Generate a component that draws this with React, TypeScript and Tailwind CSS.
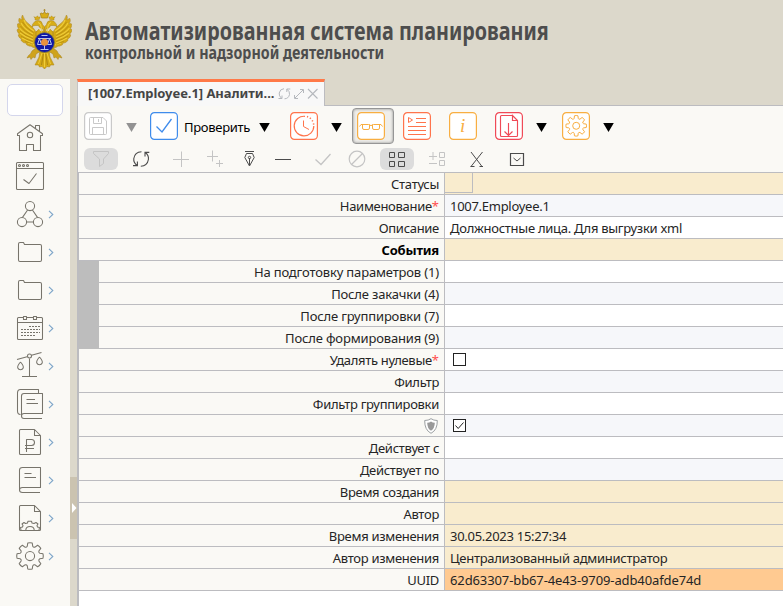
import React from "react";

const gearPath = (cx: number, cy: number, r: number, depth: number) => {
  const pts: string[] = [];
  const teeth = 8;
  for (let i = 0; i < teeth; i++) {
    const a = (i * 2 * Math.PI) / teeth - Math.PI / 2;
    const at = (rad: number, d: number) =>
      `${(cx + rad * Math.cos(a + d)).toFixed(2)} ${(cy + rad * Math.sin(a + d)).toFixed(2)}`;
    const inner = r - depth;
    pts.push(`${i === 0 ? "M" : "L"}${at(inner, -0.27)}`);
    pts.push(`L${at(r, -0.17)} Q${at(r + 0.4, 0)} ${at(r, 0.17)}`);
    pts.push(`L${at(inner, 0.27)} Q${at(inner - 1.1, 0.39)} ${at(inner, 0.51)}`);
  }
  return pts.join(" ") + "Z";
};

const Wing = () => (
  <g>
    <path
      d="M36 32Q34 28 30 25Q24 21 22.5 15Q21 17 22 20Q19.5 18 19 18.5Q18 21 20 24Q17.5 23 17.5 24Q17 27 19 29Q17 29 17 30Q17.5 33 19.5 34Q17.8 34.5 18.5 36Q19.5 38.5 21.5 39Q20.5 40 21.5 41Q24 43.5 26 43Q26 45 28 45.5Q30 46.5 31 46Q32 47.5 36 48Z"
      fill="#d5a915"
      stroke="#b08c2b"
      strokeWidth=".6"
    />
    <path d="M24 20Q26 26 34 31M21 23Q24 29 33 34M19.5 28Q23 33 33 37M20 33Q25 37 33 40M22 38Q27 41 33 43M28 43L34 45" stroke="#efcd3a" strokeWidth="1.1" fill="none" />
    <path d="M22.5 22Q25 27.5 33.5 32.5M20.5 26Q24 31.5 33 35.5M20 31Q24 35.5 33 38.5M21 36Q26 39.5 33 41.5M25 41L33 44.5" stroke="#a17a10" strokeWidth=".5" fill="none" />
  </g>
);

const EagleHead = () => (
  <g>
    <path d="M43.5 36L43 29Q39 28 38.5 25.5L35 25.5Q33 25.5 32 27Q32 24 34 22.5Q35 20.5 38 20.5Q42 20.5 42.5 24.5L44.5 27V36L36 36Q35 32 39 29" fill="#d8ad18" stroke="#a5801a" strokeWidth=".5" />
    <path d="M35 20V18L33.8 16.8L36 17.3L37.5 15.8L38.5 17.3L40.2 16.8L39.3 19.5Z" fill="#d8ad18" stroke="#a5801a" strokeWidth=".4" />
    <path d="M38 22.5Q40.5 23 41 26L42 34" stroke="#f0d244" strokeWidth=".9" fill="none" />
  </g>
);

const Emblem = () => (
  <svg width="56" height="62" viewBox="16 8 56 62" fill="none" className="shrink-0">
    <Wing />
    <g transform="translate(89 0) scale(-1 1)"><Wing /></g>
    <path d="M37 47L32 51Q31 54 28.5 55.5L27 58L30 57L31 59.5L33 57L35 58L36 54L41 51ZM52 47L57 51Q58 54 60.5 55.5L62 58L59 57L58 59.5L56 57L54 58L53 54L48 51Z" fill="#cfa31c" stroke="#a5801a" strokeWidth=".5" />
    <path d="M40 50L39 57L35 65L38.5 65L39.5 67L42 66.5L44.5 69L47 66.5L49.5 67L50.5 65L54 65L50 57L49 50Z" fill="#d5a915" stroke="#a5801a" strokeWidth=".5" />
    <path d="M42 53L38.5 64M44.5 53V67M47 53L50.5 64" stroke="#efcd3a" strokeWidth="1" />
    <path d="M43.3 54L41.5 65M45.8 54L47.5 65" stroke="#9b7812" strokeWidth=".7" />
    <rect x="36" y="31" width="17" height="16" fill="#cfa31c" />
    <EagleHead />
    <g transform="translate(89 0) scale(-1 1)"><EagleHead /></g>
    <path d="M41.5 18L40.2 13.5Q42 12.3 43 14L44.5 11.5L46 14Q47 12.3 48.8 13.5L47.5 18ZM44.5 9V12M43.3 10.2H45.7" fill="#d8ad18" stroke="#a5801a" strokeWidth=".7" />
    <circle cx="44.5" cy="42.5" r="10" fill="#1019a5" stroke="#8d8130" strokeWidth=".8" />
    <path d="M38 38.5H51M39.5 38.5L37.5 44.5H41.5L39.5 38.5M49.5 38.5L47.5 44.5H51.5L49.5 38.5M44.5 38V49.5M40.5 49.5H48.5M41.5 35.5H47.5" stroke="#b9c6ea" strokeWidth="1" />
    <circle cx="44.5" cy="42.3" r="3.5" fill="#e8913d" />
  </svg>
);

const sideIcons: { id: string; arrow: boolean; art: React.ReactNode }[] = [
  { id: "home", arrow: false, art: <><path d="M19.5 16.5H17.5V14.8L30 5.8L42.5 14.8V16.5H40.5V31.5H33.5V25.5H26.5V31.5H19.5ZM35.5 9.5V6.5H39.5V12.5" /><circle cx="30" cy="16" r="2.7" /></> },
  { id: "tasks", arrow: false, art: <><rect x="16.5" y="5.5" width="27" height="27" rx="1" /><path d="M16.5 11.5H43.5M23.5 22.5L29 26.5L36.5 16.5" /><circle cx="19.5" cy="8.5" r="1" /><circle cx="23.5" cy="8.5" r="1" /><circle cx="27.5" cy="8.5" r="1" /></> },
  { id: "network", arrow: true, art: <><circle cx="30" cy="11" r="4.6" /><circle cx="22" cy="27" r="4.6" /><circle cx="38" cy="27" r="4.6" /><path d="M27.6 15L22.5 22.4M32.4 15L37.5 22.4M26.6 27H33.4" /></> },
  { id: "folder-a", arrow: true, art: <path d="M18.5 27V11Q18.5 9.5 20 9.5H23.5L24.5 11.5H40Q41.5 11.5 41.5 13V27Q41.5 28.5 40 28.5H20Q18.5 28.5 18.5 27Z" /> },
  { id: "folder-b", arrow: true, art: <path d="M18.5 27V11Q18.5 9.5 20 9.5H23.5L24.5 11.5H40Q41.5 11.5 41.5 13V27Q41.5 28.5 40 28.5H20Q18.5 28.5 18.5 27Z" /> },
  { id: "calendar", arrow: true, art: <><path d="M23.5 8.5H18.5Q17.5 8.5 17.5 9.5V29.5Q17.5 30.5 18.5 30.5H41.5Q42.5 30.5 42.5 29.5V9.5Q42.5 8.5 41.5 8.5H36.5M26.5 8.5H33.5M17.5 13.5H42.5" /><rect x="23.5" y="7.5" width="3" height="3" /><rect x="33.5" y="7.5" width="3" height="3" /><path d="M29 17.5H40M21 20.5H40M21 23.5H40M21 26.5H36" strokeDasharray="2 1" /></> },
  { id: "scales", arrow: true, art: <><path d="M17 12.5L27 9.8M31.5 8.2L41.5 5.5M29.5 11.5V29.5M22 29.5H37M20.5 15Q17 19 17.8 21Q18.5 22.7 20.5 22.7Q22.5 22.7 23.2 21Q24 19 20.5 15M39.5 10Q36 14 36.8 16Q37.5 17.7 39.5 17.7Q41.5 17.7 42.2 16Q43 14 39.5 10" /><circle cx="29.5" cy="9" r="2" /></> },
  { id: "documents", arrow: true, art: <path d="M38.5 8.5V5.5V4.5H20.5Q17.5 4.5 17.5 8V26Q17.5 29.5 20.5 29.5M42 33.5H24Q21.5 33.5 21.5 31V11Q21.5 8.5 24 8.5H42.5V28.5H24Q21.5 28.5 21.5 31M26.5 14.5H35M26.5 18.5H38" /> },
  { id: "ruble", arrow: true, art: <path d="M34.5 6.5H20.5Q19.5 6.5 19.5 7.5V30.5Q19.5 31.5 20.5 31.5H39.5Q40.5 31.5 40.5 30.5V12.5L34.5 6.5V12.5H40.5M26.5 29V16.5H31.5Q34.5 16.5 34.5 19.5Q34.5 22.5 31.5 22.5H25M25 25.5H34" /> },
  { id: "book", arrow: true, art: <path d="M40 31.5H22.5Q19.5 31.5 19.5 29V9Q19.5 6.5 22.5 6.5H40.5V26.5H22.5Q19.5 26.5 19.5 29M24.5 12.5H31.5M24.5 16.5H36" /> },
  { id: "report-settings", arrow: true, art: <><path d="M34.5 6.5H20.5Q19.5 6.5 19.5 7.5V30.5Q19.5 31.5 20.5 31.5H39.5Q40.5 31.5 40.5 30.5V12.5L34.5 6.5V12.5H40.5" /><path d="M21 31L20.5 28.5L22.5 28L23 26.5L22 25L24 23.5L25.5 24.5L27.5 24L28 22.2H31.5L32 24L34 24.5L36 23.5L38 25L37 26.5L37.5 28L39.5 28.5L39 31M25.8 31Q26 27.5 30 27.5Q34 27.5 34.2 31" /></> },
  { id: "settings", arrow: true, art: <><path d={gearPath(30, 19, 13.2, 3)} /><circle cx="30" cy="19" r="4.6" /></> },
];

const Sidebar = () => (
  <aside className="flex w-[70px] shrink-0 flex-col bg-[#faf9f5]">
    <div className="ml-[7px] mt-[5px] mb-[3px] h-8 w-14 shrink-0 rounded-[5px] border border-[#d4d6ec] bg-white" />
    {sideIcons.map((icon) => (
      <svg key={icon.id} width="70" height="38" viewBox="0 0 70 38" fill="none" className="shrink-0">
        <g stroke="#77746b" strokeWidth="1.05" strokeLinejoin="round">{icon.art}</g>
        {icon.arrow && <path d="M49 15.8L52.8 19.5L49 23.2" stroke="#7ea6c9" strokeWidth="1.1" />}
      </svg>
    ))}
  </aside>
);

const Triangle = ({ className }: { className: string }) => (
  <svg width="11" height="28" viewBox="0 0 11 28" className={`shrink-0 ${className}`}>
    <path d="M.2 11H10.8L5.5 20Z" fill="currentColor" />
  </svg>
);

const Tool = ({ className = "", children }: { className?: string; children: React.ReactNode }) => (
  <svg
    width="28" height="28" viewBox="0 0 28 28" fill="none" stroke="currentColor" strokeWidth="1"
    className={`shrink-0 ${className}`}
  >
    <rect x=".6" y=".6" width="26.8" height="26.8" rx="3.8" fill="white" strokeWidth="1.2" />
    {children}
  </svg>
);

const MainTools = () => (
  <div className="flex h-[40px] items-center">
    <Tool className="ml-[6px] text-[#c9c9c9]"><path d="M5.5 6.5Q5.5 5.5 6.5 5.5H19L22.5 9V21.5Q22.5 22.5 21.5 22.5H6.5Q5.5 22.5 5.5 21.5ZM9.5 5.5V11.5H17.5V5.5M14.5 7V10M8.5 22.5V15.5H19.5V22.5" /></Tool>
    <Triangle className="ml-[14px] text-[#929292]" />
    <Tool className="ml-[13px] text-[#3f8cec]"><path d="M6.5 14.5L12 20L21.5 7" strokeWidth="1.3" /></Tool>
    <span className="ml-[6px] w-[66px] whitespace-nowrap pt-[3px] text-[13px] tracking-[-0.3px] text-black">Проверить</span>
    <Triangle className="ml-[9px] text-black" />
    <Tool className="ml-[20px] text-[#ff744c]">
      <path d="M15 4.3A9.8 9.8 0 1 0 23.8 14" strokeWidth="1.2" />
      <path d="M17 4.5A9.8 9.8 0 0 1 23.8 14" strokeWidth="1.6" strokeDasharray="1.2 2" />
      <path d="M13.5 8.5V14.5L19 17.5" />
    </Tool>
    <Triangle className="ml-[13px] text-black" />
    <div className="ml-[10px] flex h-9 w-[42px] shrink-0 items-center rounded-[4px] border border-[#969696] bg-[#efeeea] pl-1 shadow-[inset_0_0_3px_#8c8c8c]">
      <Tool className="text-[#f8ae42]"><path d="M2.5 14.5L4 12.5H11.5Q13.5 12.5 14 14Q14.5 12.5 16.5 12.5H24L25.5 14.5M5.5 12.5V16Q5.5 17.5 7 17.5H11Q12.5 17.5 12.5 16V13M15.5 13V16Q15.5 17.5 17 17.5H21Q22.5 17.5 22.5 16V12.5" /></Tool>
    </div>
    <Tool className="ml-[9px] text-[#ff744c]"><path d="M13 6.5H23M13 10.5H23M5 14.5H23M5 18.5H23M5 22.5H23M5.5 5.5V10.5L9.5 8Z" /></Tool>
    <Tool className="ml-[18px] text-[#f8ae42]">
      <text x="11" y="20" fill="currentColor" stroke="none" fontFamily="Liberation Serif, serif" fontStyle="italic" fontSize="19">i</text>
    </Tool>
    <Tool className="ml-[18px] text-[#f04a57]"><path d="M17.5 3.5H6.5Q5.5 3.5 5.5 4.5V23.5Q5.5 24.5 6.5 24.5H21.5Q22.5 24.5 22.5 23.5V8.5L17.5 3.5V8.5H22.5M13.5 11V23.5M9.5 19.5L13.5 23.5L17.5 19.5" strokeWidth="1.15" /></Tool>
    <Triangle className="ml-[13px] text-black" />
    <Tool className="ml-[15px] text-[#f8ae42]"><path d={gearPath(14.2, 13.8, 10.2, 2.5)} /><circle cx="14.2" cy="13.8" r="3.5" /></Tool>
    <Triangle className="ml-[13px] text-black" />
  </div>
);

const Action = ({ className = "", children }: { className?: string; children: React.ReactNode }) => (
  <svg width="34" height="22" viewBox="0 0 34 22" fill="none" stroke="currentColor" className={`shrink-0 rounded-[6px] ${className}`}>
    {children}
  </svg>
);

const dark = "text-[#4b4b4b]";
const pale = "text-[#c4c4c4]";

const ActionRow = () => (
  <div className="flex h-[26px] items-center pl-[6px]">
    <Action className={`bg-[#dcdcdc] ${pale}`}><path d="M9.5 3.5H24.5V5.5L19.5 11V15.5L15.5 18.5V11L9.5 5.5Z" /></Action>
    <Action className={`ml-[6px] ${dark}`}><path d="M13 17.5Q9.3 14.5 9.8 10.5Q10.7 4 17.5 3.7M9 17.6H13.4V13.5M21.5 4.5Q25 7.5 24.4 11.5Q23.3 18 16.8 18.3M25.3 4.4H21V8.5" strokeWidth="1.1" /></Action>
    <Action className={`ml-[6px] ${pale}`}><path d="M17.5 3.5V19M9 11.5H25" /></Action>
    <Action className={pale}><path d="M14.5 2.5V13.5M9 8.5H20M21.5 12V19M18 15.5H25" /></Action>
    <Action className={dark}><path d="M13 3.5H22M14.5 5.5L12.8 9.5L17.5 18L22.2 9.5L20.5 5.5ZM17.5 17V10" /><circle cx="17.5" cy="9.5" r="1.2" /></Action>
    <Action className={dark}><path d="M9 11.5H25" strokeWidth="1.1" /></Action>
    <Action className={`ml-[6px] ${pale}`}><path d="M9.5 11.5L15 16.5L24.5 6" strokeWidth="1.3" /></Action>
    <Action className={pale}><circle cx="17" cy="11" r="7.8" strokeWidth="1.2" /><path d="M11.5 16.5L22.5 5.5" strokeWidth="1.2" /></Action>
    <Action className={`ml-[6px] bg-[#dcdcdc] ${dark}`}><path d="M9.5 4.5H14.5V9.5H9.5ZM18.5 4.5H24.5V9.5H18.5ZM9.5 13.5H14.5V18.5H9.5ZM18.5 13.5H24.5V18.5H18.5Z" /></Action>
    <Action className={`ml-[6px] ${pale}`}><path d="M13 4V12M9 8.5H17M9 15.5H17M19.5 4.5H24.5V9.5H19.5ZM19.5 12.5H24.5V17.5H19.5Z" /></Action>
    <Action className={`ml-[6px] ${dark}`}><path d="M11 4L22 18.5M22.5 4L11 18.5M10.5 18.5H14.5M19.5 18.5H23" /></Action>
    <Action className={`ml-[6px] ${dark}`}><path d="M10.5 5.5H23.5V17.5H10.5Z" strokeWidth="1.2" /><path d="M13.5 10L17 13L20.5 10" /></Action>
  </div>
);

type Row = { label?: string; required?: boolean; bold?: boolean; inset?: boolean; value?: string; bg: string; kind?: "status" | "empty" | "checked" };

const soft = "bg-[#f6f7fa]";
const cream = "bg-[#f9ecce]";
const rows: Row[] = [
  { label: "Статусы", bg: cream, kind: "status" },
  { label: "Наименование", required: true, value: "1007.Employee.1", bg: soft },
  { label: "Описание", value: "Должностные лица. Для выгрузки xml", bg: "bg-white" },
  { label: "События", bold: true, bg: cream },
  { label: "На подготовку параметров (1)", inset: true, bg: "bg-white" },
  { label: "После закачки (4)", inset: true, bg: soft },
  { label: "После группировки (7)", inset: true, bg: "bg-white" },
  { label: "После формирования (9)", inset: true, bg: soft },
  { label: "Удалять нулевые", required: true, bg: "bg-white", kind: "empty" },
  { label: "Фильтр", bg: soft },
  { label: "Фильтр группировки", bg: "bg-white" },
  { bg: soft, kind: "checked" },
  { label: "Действует с", bg: "bg-white" },
  { label: "Действует по", bg: soft },
  { label: "Время создания", bg: cream },
  { label: "Автор", bg: cream },
  { label: "Время изменения", value: "30.05.2023 15:27:34", bg: cream },
  { label: "Автор изменения", value: "Централизованный администратор", bg: cream },
  { label: "UUID", value: "62d63307-bb67-4e43-9709-adb40afde74d", bg: "bg-[#ffca91]" },
];

const Shield = () => (
  <svg width="14" height="16" viewBox="0 0 14 16" className="mr-px shrink-0">
    <path d="M7 .7Q9.5 2.5 13.3 2.5Q13.5 12 7 15.3Q.5 12 .7 2.5Q4.5 2.5 7 .7Z" fill="white" stroke="#9b9fa1" />
    <path d="M7 3.5Q8.5 4.7 10.8 4.8Q10.7 10.7 7 12.8Q3.3 10.7 3.2 4.8Q5.5 4.7 7 3.5Z" fill="#999" />
  </svg>
);

const PropertyRow = ({ row }: { row: Row }) => (
  <div className="flex h-[22px] shrink-0 text-[13px] leading-[22px] text-[#252525]">
    {row.inset && <div className="w-5 shrink-0 bg-[#bdbdbd]" />}
    <div className="flex min-w-0 flex-1 items-center border-b border-[#bcbcc0]">
      <div className="flex h-full flex-1 items-center justify-end whitespace-nowrap bg-[#faf9f5] pr-[5px]">
        {row.label ? <span className={row.bold ? "font-bold tracking-[-0.2px] text-black" : row.inset ? "tracking-[-0.16px]" : "tracking-[-0.3px]"}>{row.label}</span> : <Shield />}
        {row.required && <span className="text-[#ff4e4e]">*</span>}
      </div>
      <div className={`flex h-full w-[339px] shrink-0 items-center whitespace-nowrap border-l border-[#bcbcc0] ${row.bg}`}>
        {row.value && <span className={`pl-[5px] ${row.label === "UUID" ? "tracking-[-0.11px]" : "tracking-[-0.28px]"}`}>{row.value}</span>}
        {row.kind === "status" && <div className="h-5 w-7 self-start border-b border-r border-[#bcbcc0]" />}
        {(row.kind === "empty" || row.kind === "checked") && (
          <svg width="13" height="13" viewBox="0 0 13 13" className="ml-2 mb-px" fill="white" stroke="#222">
            <rect x=".5" y=".5" width="12" height="12" />
            {row.kind === "checked" && <path d="M2.5 6.5L5.2 9.5L10.5 3.5" fill="none" />}
          </svg>
        )}
      </div>
    </div>
  </div>
);

const TabStrip = () => (
  <div className="flex h-[27px] shrink-0">
    <div className="flex w-[248px] items-center border-l border-r border-t-[3px] border-l-[#c4c4c4] border-r-[#bcbcc0] border-t-[#ff7948] bg-[#f8f8f8] pl-[10px]">
      <span className="w-[187px] whitespace-nowrap text-[13px] font-bold tracking-[-0.05px] text-[#454545]">[1007.Employee.1] Аналити...</span>
      <svg width="42" height="16" viewBox="0 0 42 16" fill="none" stroke="#b5b8bd" className="ml-[2px] shrink-0">
        <path d="M4.5 12.3Q1.8 10 2.2 7Q3 2.9 7 2.7M1.5 12.5H5V9.5M10 3.2Q13 5.5 12.5 8.5Q11.5 12.7 7.5 12.8M13.3 3H9.8V6" />
        <path d="M18 12L26 4M23 3.5H26.5V7M17.5 9V12.5H21" />
        <path d="M31 3L40.5 12.5M40.5 3L31 12.5" strokeWidth="1.1" />
      </svg>
    </div>
    <div className="flex-1 border-b border-[#bcbcc0]" />
  </div>
);

export default function App() {
  return (
    <div className="flex h-[606px] w-[783px] flex-col overflow-hidden bg-[#dcd8cb] font-['Noto_Sans','Open_Sans',sans-serif]">
      <header className="flex h-[79px] shrink-0 pl-4 pt-2">
        <Emblem />
        <div className="ml-[13px] whitespace-nowrap font-bold text-[#4d4d4d]">
          <h1 className="mt-[9px] h-[26px] w-max origin-left scale-x-[.79] text-[25px] leading-[27px]">Автоматизированная система планирования</h1>
          <p className="w-max origin-left scale-x-[.84] text-[17px] leading-[20px]">контрольной и надзорной деятельности</p>
        </div>
      </header>
      <div className="flex min-h-0 flex-1">
        <Sidebar />
        <div className="flex w-[7px] shrink-0 flex-col">
          <div className="mt-[398px] flex h-[62px] items-center bg-[#cbc3b0]">
            <svg width="7" height="12" viewBox="0 0 7 12"><path d="M2 1L6.5 6L2 11Z" fill="white" /></svg>
          </div>
        </div>
        <main className="flex min-w-0 flex-1 flex-col">
          <TabStrip />
          <section className="flex flex-1 flex-col border-l border-[#bcbcc0] bg-[#faf9f5]">
            <MainTools />
            <ActionRow />
            <div className="flex flex-1 flex-col border-l border-t border-[#bcbcc0] bg-white">
              {rows.map((row, index) => <PropertyRow key={index} row={row} />)}
            </div>
          </section>
        </main>
      </div>
    </div>
  );
}
